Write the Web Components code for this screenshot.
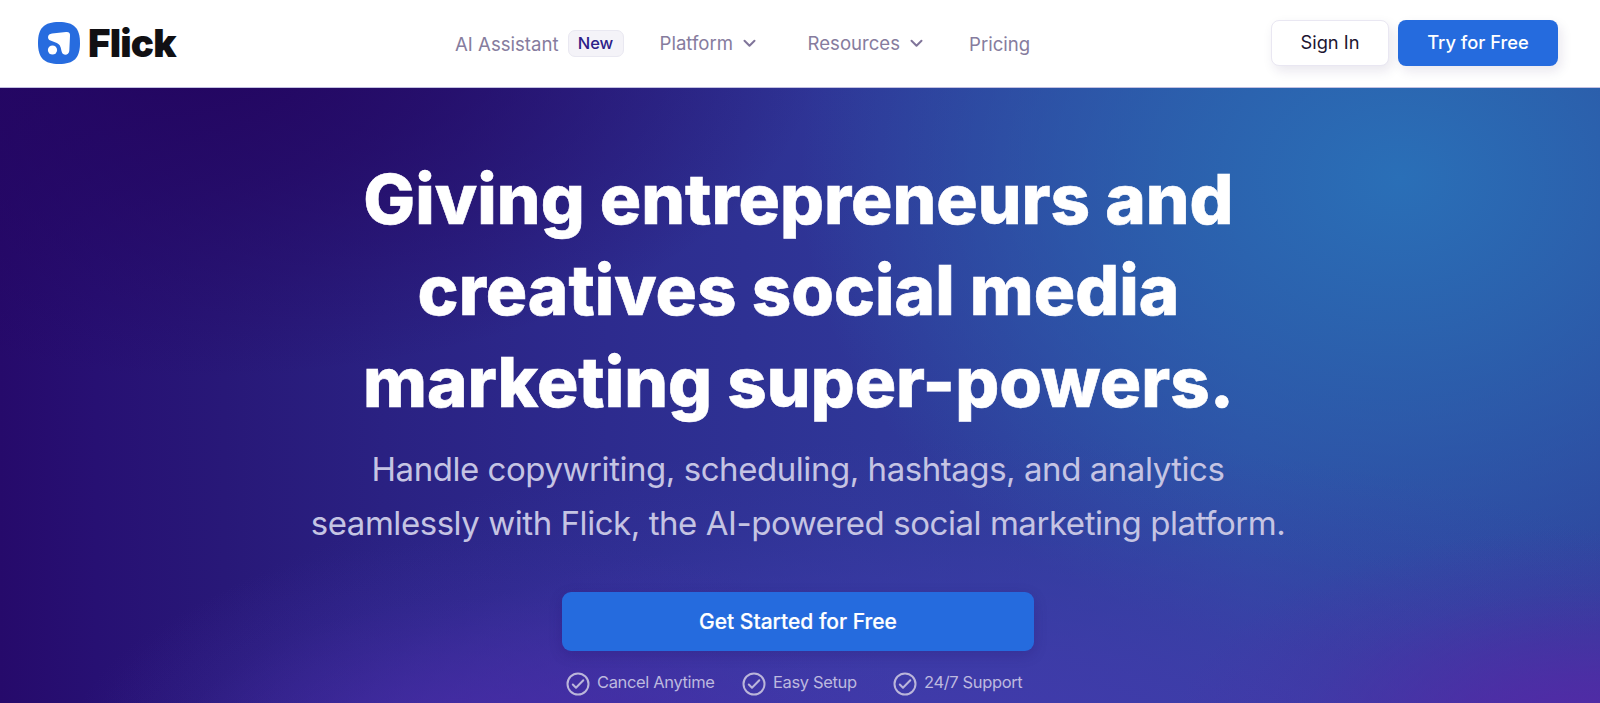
<!DOCTYPE html>
<html lang="en">
<head>
<meta charset="utf-8">
<title>Flick</title>
<style>
    body{
        margin:0;
        width:1600px;
        height:703px;
        overflow:hidden;
        font-family:Inter,"Liberation Sans",sans-serif;
        background:white;
    }
</style>
</head>
<body>
<flick-page></flick-page>
<script>
class FlickLogo extends HTMLElement{
    constructor(){
        super()
        this.attachShadow({mode:'open'})
    }
    connectedCallback(){
        this.shadowRoot.innerHTML = `
        <style>
            :host{
                display:flex;
                align-items:center;
                gap:8px;
                width:417px;
            }
            svg{
                display:block;
                flex:none;
            }
            span{
                font-size:38.5px;
                line-height:42px;
                font-weight:900;
                letter-spacing:-.8px;
                color:#111013;
            }
        </style>
        <svg width="42" height="42" viewBox="0 0 42 42">
            <path fill="#276cdf" d="M21 0C36 0 42 6 42 21S36 42 21 42 0 36 0 21 6 0 21 0Z"/>
            <path fill="white" d="M14 11.500L28 10C31 9.700 32.300 11 32 14L31.300 29C30.900 33.600 24.800 33.800 23.800 30C22.800 25.500 22.400 22.600 18.800 21L12.500 18.600C8.800 17.200 9.300 12 14 11.500Z"/>
            <circle cx="14.500" cy="28" r="4.600" fill="white"/>
        </svg>
        <span>Flick</span>
        `
    }
}
window.customElements.define('flick-logo',FlickLogo);

class NavItem extends HTMLElement{
    constructor(){
        super()
        this.attachShadow({mode:'open'})
    }
    connectedCallback(){
        const arrow = this.hasAttribute('menu')
            ? `<svg width="13" height="9" viewBox="0 0 13 9"><path d="M1.500 1.800L6.500 6.800L11.500 1.800" fill="none" stroke="#80759a" stroke-width="2" stroke-linecap="round" stroke-linejoin="round"/></svg>`
            : ''
        this.shadowRoot.innerHTML = `
        <style>
            :host{
                display:flex;
                align-items:center;
                flex:none;
                font-size:18.6px;
                line-height:26px;
                color:#867c9e;
                white-space:nowrap;
            }
            svg{
                margin-left:10px;
            }
        </style>
        <slot></slot>${arrow}
        `
    }
}
window.customElements.define('nav-item',NavItem);

class NewBadge extends HTMLElement{
    constructor(){
        super()
        this.attachShadow({mode:'open'})
    }
    connectedCallback(){
        this.shadowRoot.innerHTML = `
        <style>
            :host{
                display:block;
                box-sizing:border-box;
                width:56px;
                height:27px;
                margin-left:9px;
                border:1px solid #e9e8f1;
                border-radius:7px;
                background:#f4f3f8;
                color:#2c2088;
                font-size:16.5px;
                font-weight:500;
                line-height:25px;
                text-align:center;
            }
        </style>
        <slot></slot>
        `
    }
}
window.customElements.define('new-badge',NewBadge);

class FlickButton extends HTMLElement{
    constructor(){
        super()
        this.attachShadow({mode:'open'})
    }
    connectedCallback(){
        this.shadowRoot.innerHTML = `
        <style>
            :host{
                display:flex;
                align-items:center;
                justify-content:center;
                box-sizing:border-box;
                flex:none;
                width:160px;
                height:46px;
                padding-bottom:2px;
                border-radius:8px;
                background:#256bde;
                color:white;
                font-size:18.3px;
                font-weight:500;
                box-shadow:3px 5px 12px rgba(38,20,90,.1);
            }
            :host([kind=plain]){
                width:118px;
                background:white;
                border:1.500px solid #e9e7f2;
                color:#1c1530;
                font-weight:400;
            }
            :host([kind=big]){
                width:472px;
                height:59px;
                padding-bottom:0;
                border-radius:9px;
                font-size:21px;
                -webkit-text-stroke:.2px white;
                box-shadow:0 4px 14px rgba(30,10,90,.2);
            }
        </style>
        <slot></slot>
        `
    }
}
window.customElements.define('flick-button',FlickButton);

class CheckItem extends HTMLElement{
    constructor(){
        super()
        this.attachShadow({mode:'open'})
    }
    connectedCallback(){
        this.shadowRoot.innerHTML = `
        <style>
            :host{
                display:flex;
                gap:7px;
                height:24px;
                font-size:16.5px;
                line-height:20px;
                letter-spacing:-.36px;
                color:#bdb9df;
                white-space:nowrap;
            }
            svg{
                flex:none;
            }
        </style>
        <svg width="24" height="24" viewBox="0 0 24 24" fill="none" stroke="#bbb6da" stroke-width="2">
            <circle cx="12" cy="12" r="10.500"/>
            <path d="M6.800 12.500L10 15.700L17.300 8.300" stroke-linecap="round" stroke-linejoin="round"/>
        </svg>
        <slot></slot>
        `
    }
}
window.customElements.define('check-item',CheckItem);

class FlickHeader extends HTMLElement{
    constructor(){
        super()
        this.attachShadow({mode:'open'})
    }
    connectedCallback(){
        this.shadowRoot.innerHTML = `
        <style>
            :host{
                display:flex;
                align-items:flex-start;
                box-sizing:border-box;
                height:88px;
                padding:20px 42px 0 38px;
                background:white;
                border-bottom:1px solid #c3c1e2;
            }
            flick-logo{
                margin-top:2px;
            }
            nav{
                display:flex;
                align-items:center;
                flex:1;
                height:46px;
            }
            .low{
                padding-top:2px;
            }
            .platform{
                margin-left:36px;
            }
            .resources{
                margin-left:51.500px;
            }
            .pricing{
                margin-left:46px;
            }
            .actions{
                display:flex;
                gap:9px;
            }
        </style>
        <flick-logo></flick-logo>
        <nav>
            <nav-item class="low">AI Assistant</nav-item>
            <new-badge>New</new-badge>
            <nav-item class="platform" menu>Platform</nav-item>
            <nav-item class="resources" menu>Resources</nav-item>
            <nav-item class="pricing low">Pricing</nav-item>
        </nav>
        <div class="actions">
            <flick-button kind="plain">Sign In</flick-button>
            <flick-button>Try for Free</flick-button>
        </div>
        `
    }
}
window.customElements.define('flick-header',FlickHeader);

class FlickHero extends HTMLElement{
    constructor(){
        super()
        this.attachShadow({mode:'open'})
    }
    connectedCallback(){
        this.shadowRoot.innerHTML = `
        <style>
            :host{
                display:flex;
                flex-direction:column;
                align-items:center;
                box-sizing:border-box;
                height:615px;
                padding-right:4px;
                text-align:center;
                background:
                    radial-gradient(ellipse 420px 210px at 1590px 650px, #5428a6 0%, #5428a6bb 30%, #5428a633 70%, #5428a600 100%),
                    radial-gradient(ellipse 440px 230px at 500px 680px, #4a2ba8 0%, #4a2ba899 35%, #4a2ba822 75%, #4a2ba800 100%),
                    radial-gradient(ellipse 900px 330px at 980px 680px, #433aad 0%, #403baacc 35%, #3c3ba833 75%, #3c3ba800 100%),
                    radial-gradient(ellipse 600px 480px at 1400px 90px, #2a6fb7 0%, #2a68b1cc 35%, #2a60ae00 100%),
                    radial-gradient(ellipse 620px 330px at 200px -40px, #230560 0%, #230560aa 40%, #23056000 100%),
                    linear-gradient(90deg, #260a6b 0%, #271073 6%, #281878 14%, #2a2182 24%, #2d2b8e 38%, #2f3798 55%, #3046a1 78%, #2f429c 100%);
            }
            h1{
                margin:65.500px 0 0 1px;
                font-size:69px;
                line-height:91.700px;
                font-weight:800;
                -webkit-text-stroke:.6px white;
                color:white;
                white-space:nowrap;
            }
            p{
                margin:13.300px 0 0;
                font-size:33px;
                line-height:54px;
                letter-spacing:-.45px;
                color:#c5c4e3;
                white-space:nowrap;
            }
            flick-button{
                margin-top:42px;
            }
            .checks{
                display:grid;
                grid-template-columns:176px 151px 121px;
                width:464px;
                margin-top:20.600px;
            }
        </style>
        <h1>Giving entrepreneurs and<br>creatives social media<br>marketing super-powers.</h1>
        <p>Handle copywriting, scheduling, hashtags, and analytics<br>seamlessly with Flick, the AI-powered social marketing platform.</p>
        <flick-button kind="big">Get Started for Free</flick-button>
        <div class="checks">
            <check-item>Cancel Anytime</check-item>
            <check-item>Easy Setup</check-item>
            <check-item>24/7 Support</check-item>
        </div>
        `
    }
}
window.customElements.define('flick-hero',FlickHero);

class FlickPage extends HTMLElement{
    constructor(){
        super()
        this.attachShadow({mode:'open'})
    }
    connectedCallback(){
        this.shadowRoot.innerHTML = `
        <style>
            :host{
                display:block;
            }
        </style>
        <flick-header></flick-header>
        <flick-hero></flick-hero>
        `
    }
}
window.customElements.define('flick-page',FlickPage);
</script>
</body>
</html>
